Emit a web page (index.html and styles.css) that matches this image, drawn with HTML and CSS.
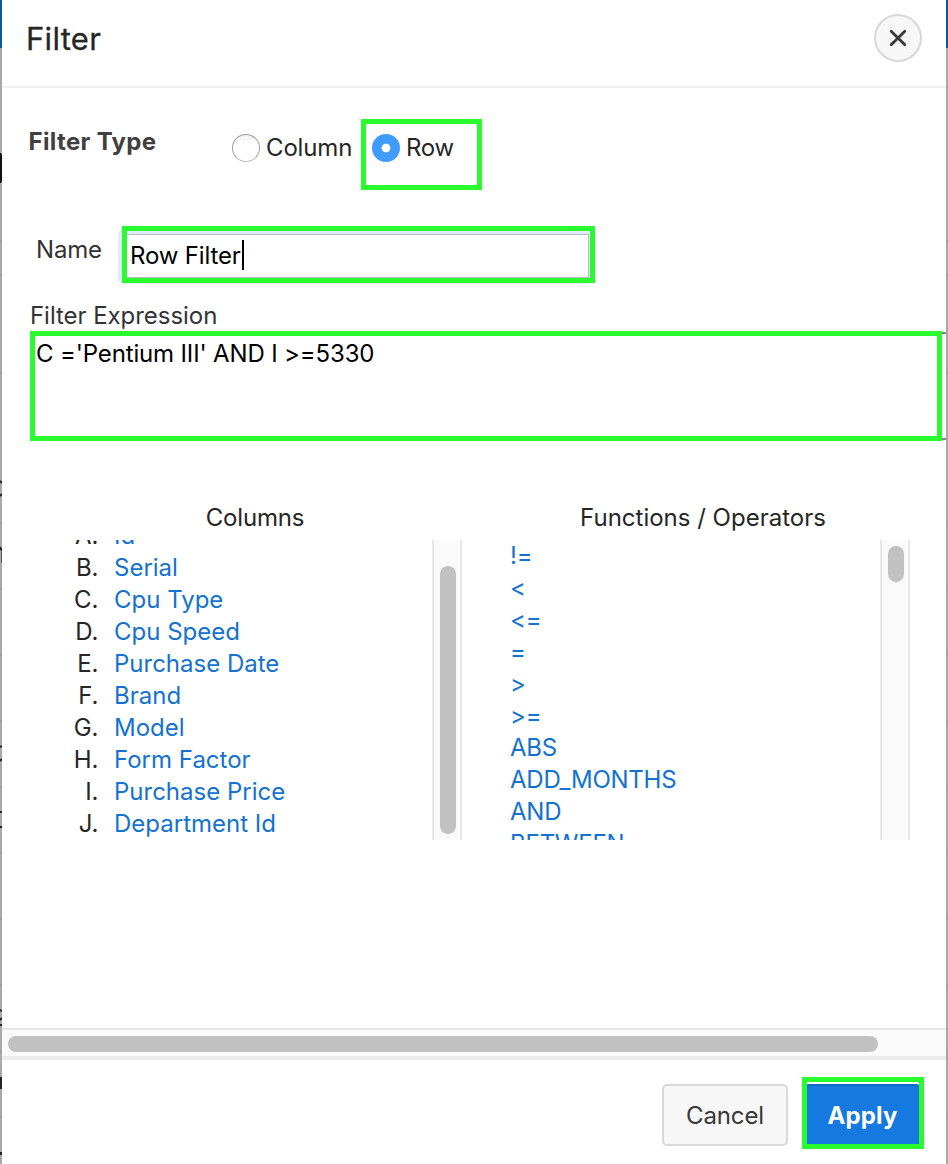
FILE: index.html
```
<!DOCTYPE html>
<html lang="en">
<head>
<meta charset="utf-8">
<title>Filter</title>
<link rel="stylesheet" href="styles.css">
</head>
<body>
<div class="page">
  <div class="edge edge-left">
    <svg class="fragments" width="2" height="1164" viewBox="0 0 2 1164">
      <path fill="#111" d="M0 153h1l1 2v26l-1 2H0z"/>
      <path fill="none" stroke="#222" stroke-width="2" d="M0 481l2 2M0 496l2-2M0 547l2 4M0 747l2-1M0 761l2-2M0 812h2M0 827h2M0 1010l2 1M0 1020l2-2M0 1025h2M1 1077v12M1 1152v3"/>
      <path fill="none" stroke="#555" stroke-width="1" d="M1.500 552v11"/>
    </svg>
  </div>
  <main class="dialog">
    <header class="header">
      <h1 class="title">Filter</h1>
      <button class="close" aria-label="Close">
        <svg width="18" height="18" viewBox="0 0 18 18"><path d="M2.200 2.200L15.800 15.800M15.800 2.200L2.200 15.800"/></svg>
      </button>
    </header>
    <section class="body">
      <div class="type-row">
        <span class="type-label">Filter Type</span>
        <label class="option"><i class="radio"></i><span class="t-column">Column</span></label>
        <label class="option option-row"><i class="radio radio-on"></i><span class="t-row">Row</span><b class="mark mark-row"></b></label>
      </div>
      <div class="name-row">
        <span class="name-label">Name</span>
        <div class="field"><div class="input"><span class="t-value">Row Filter</span><i class="caret"></i></div><b class="mark mark-name"></b></div>
      </div>
      <div class="expr-label"><span>Filter Expression</span></div>
      <div class="expr"><span class="t-expr">C ='Pentium III' AND I &gt;=5330</span><b class="mark mark-expr"></b></div>
      <div class="lists">
        <div class="panel panel-columns">
          <div class="panel-title t-columns">Columns</div>
          <div class="panel-view">
            <ul class="items lettered">
              <li><em>A.</em><a>Id</a></li>
              <li><em>B.</em><a>Serial</a></li>
              <li><em>C.</em><a>Cpu Type</a></li>
              <li><em>D.</em><a>Cpu Speed</a></li>
              <li><em>E.</em><a>Purchase Date</a></li>
              <li><em>F.</em><a>Brand</a></li>
              <li><em>G.</em><a>Model</a></li>
              <li><em>H.</em><a>Form Factor</a></li>
              <li><em>I.</em><a>Purchase Price</a></li>
              <li><em>J.</em><a>Department Id</a></li>
            </ul>
            <div class="vscroll vscroll-end"><i class="thumb"></i></div>
          </div>
        </div>
        <div class="panel panel-functions">
          <div class="panel-title t-functions">Functions / Operators</div>
          <div class="panel-view">
            <ul class="items functions">
              <li><a>!=</a></li>
              <li><a>&lt;</a></li>
              <li><a>&lt;=</a></li>
              <li><a>=</a></li>
              <li><a>&gt;</a></li>
              <li><a>&gt;=</a></li>
              <li><a>ABS</a></li>
              <li><a>ADD_MONTHS</a></li>
              <li><a>AND</a></li>
              <li><a>BETWEEN</a></li>
            </ul>
            <div class="vscroll vscroll-start"><i class="thumb"></i></div>
          </div>
        </div>
      </div>
    </section>
    <div class="hscroll"><i class="hthumb"></i></div>
    <footer class="footer">
      <button class="btn cancel"><span>Cancel</span></button>
      <div class="apply-wrap"><button class="btn apply"><span>Apply</span></button><b class="mark mark-apply"></b></div>
    </footer>
  </main>
  <div class="edge edge-right"></div>
</div>
</body>
</html>
```

FILE: styles.css
```
* { box-sizing: border-box; }
body { margin: 0; background: #fff; color: #262626; font: 24px/32px Inter, "Liberation Sans", sans-serif; font-feature-settings: "calt" 0; }
button { font: inherit; padding: 0; }
i, em { font-style: normal; }
.page { display: flex; width: 948px; height: 1164px; overflow: hidden; }

/* Sliver of the page behind the dialog */
.edge {
  width: 2px;
  flex: none;
  background:
    linear-gradient(#999, #999) 0 240px / 2px 2px no-repeat,
    linear-gradient(#999, #999) 0 274px / 2px 2px no-repeat,
    linear-gradient(#999, #999) 0 372px / 2px 2px no-repeat,
    repeating-linear-gradient(transparent 0 64px, #9e9e9e 64px 66px) 0 458px / 2px 706px no-repeat,
    linear-gradient(#0a569f 48px, #a9a9a9 48px);
}
.fragments { display: block; }

.dialog { width: 944px; flex: none; display: flex; flex-direction: column; }
.header { height: 88px; flex: none; display: flex; justify-content: space-between; align-items: flex-start; padding: 14px 24px 0 24px; border-bottom: 2px solid #f0f0f0; }
.title { margin: 5px 0 0; font-size: 31px; line-height: 40px; font-weight: 400; letter-spacing: .3px; -webkit-text-stroke: .3px #262626; }
.close { width: 48px; height: 48px; border: 2px solid #d8d8d8; border-radius: 50%; background: #f7f7f7; display: flex; align-items: center; justify-content: center; }
.close path { fill: none; stroke: #383838; stroke-width: 2.8; stroke-linecap: round; }

.mark { position: absolute; border: 5px solid #29fb2f; pointer-events: none; }

.body { height: 940px; flex: none; overflow: hidden; }
.type-row { display: flex; height: 138px; align-items: flex-start; padding: 44px 0 0 26.5px; }
.type-label { width: 203.5px; margin-top: -6px; font-weight: 700; color: #404040; letter-spacing: .35px; }
.option { position: relative; display: flex; align-items: center; height: 32px; gap: 6px; }
.option-row { margin-left: 20px; }
.t-column { width: 86px; white-space: nowrap; letter-spacing: -.15px; }
.t-row { letter-spacing: -.3px; }
.radio { width: 28px; height: 28px; border-radius: 50%; border: 1px solid #a2a2a2; border-bottom-color: #bbb; background: linear-gradient(#f2f2f2, #fff 35%); display: block; }
.radio-on { border: 0; background: radial-gradient(circle, #fff 0 4px, #3f9bfc 4.8px); }
.mark-row { left: -11px; top: -13px; width: 121px; height: 71px; }

.name-row { display: flex; height: 74px; padding: 0 0 0 34px; }
.name-label { width: 82px; padding-top: 8px; color: #333; letter-spacing: -.2px; }
.field { position: relative; width: 480px; height: 58px; }
.input {
  display: flex;
  align-items: center;
  width: 477px;
  height: 55px;
  margin: 3px 0 0;
  padding: 0 0 0 12px;
  border-radius: 6px;
  background:
    linear-gradient(#fff, #fff) 7px 6px / 463px 42px no-repeat,
    linear-gradient(#b9b9c0, #b9b9c0) 6px 5px / 465px 44px no-repeat,
    #e0eaf8;
}
.t-value { margin-top: -1px; color: #000; letter-spacing: -.15px; }
.caret { width: 2px; height: 30px; margin-left: 1.5px; background: #000; margin-top: -3px; }
.mark-name { left: 4px; top: 0; width: 473px; height: 57px; }

.expr-label { height: 32px; padding-left: 28px; color: #333; letter-spacing: -.05px; }
.expr { position: relative; height: 108px; margin-left: 28px; border: solid #858585; border-width: 2px 0; padding: 4px 0 0 6px; color: #000; }
.t-expr { letter-spacing: -.15px; }
.mark-expr { left: 0; top: -3px; width: 912px; height: 110px; }

.lists { display: flex; padding-top: 62px; }
.panel-title { height: 38px; text-align: center; white-space: nowrap; }
.panel-columns { width: 460px; }
.panel-columns .panel-title { padding-left: 46px; letter-spacing: -.15px; }
.panel-functions { width: 448px; }
.panel-functions .panel-title { padding-left: 34px; }
.panel-view { display: flex; justify-content: space-between; height: 300px; overflow: hidden; }
.items { list-style: none; margin: 0; padding: 0; }
.items li { display: flex; height: 32px; white-space: nowrap; }
.items a { color: #1472d0; }
.lettered { margin-top: -20px; padding-left: 26.5px; }
.lettered em { width: 70px; text-align: right; }
.lettered a { margin-left: 15.5px; }
.functions { padding-left: 48px; letter-spacing: -.25px; }
.vscroll { width: 30px; flex: none; border: solid #e8e8e8; border-width: 0 2px; background: #fafafa; padding-left: 6px; }
.thumb { display: block; width: 16px; border-radius: 8px; background: #c1c1c1; }
.vscroll-end .thumb { margin-top: 26px; height: 268px; }
.vscroll-start .thumb { margin-top: 6px; height: 36px; }

.hscroll { height: 32px; flex: none; border-top: 2px solid #e7e7e7; border-bottom: 4px solid #ebebeb; background: #fafafa; padding: 6px 0 0 6px; }
.hthumb { display: block; width: 870px; height: 16px; border-radius: 8px; background: #c1c1c1; }

.footer { height: 104px; flex: none; display: flex; justify-content: flex-end; gap: 16px; padding: 24px 25px 0 0; }
.btn { height: 62px; border-radius: 5px; white-space: nowrap; display: flex; align-items: center; justify-content: center; padding-top: 2px; }
.cancel { width: 126px; border: 2px solid #d9d9d9; background: #f7f7f7; color: #383838; letter-spacing: -.15px; }
.apply-wrap { position: relative; width: 117px; }
.apply { width: 117px; border: 2px solid #106ac7; background: #1579e0; color: #fff; font-weight: 700; letter-spacing: .1px; }
.mark-apply { left: -2px; top: -7px; width: 122px; height: 72px; }
```
